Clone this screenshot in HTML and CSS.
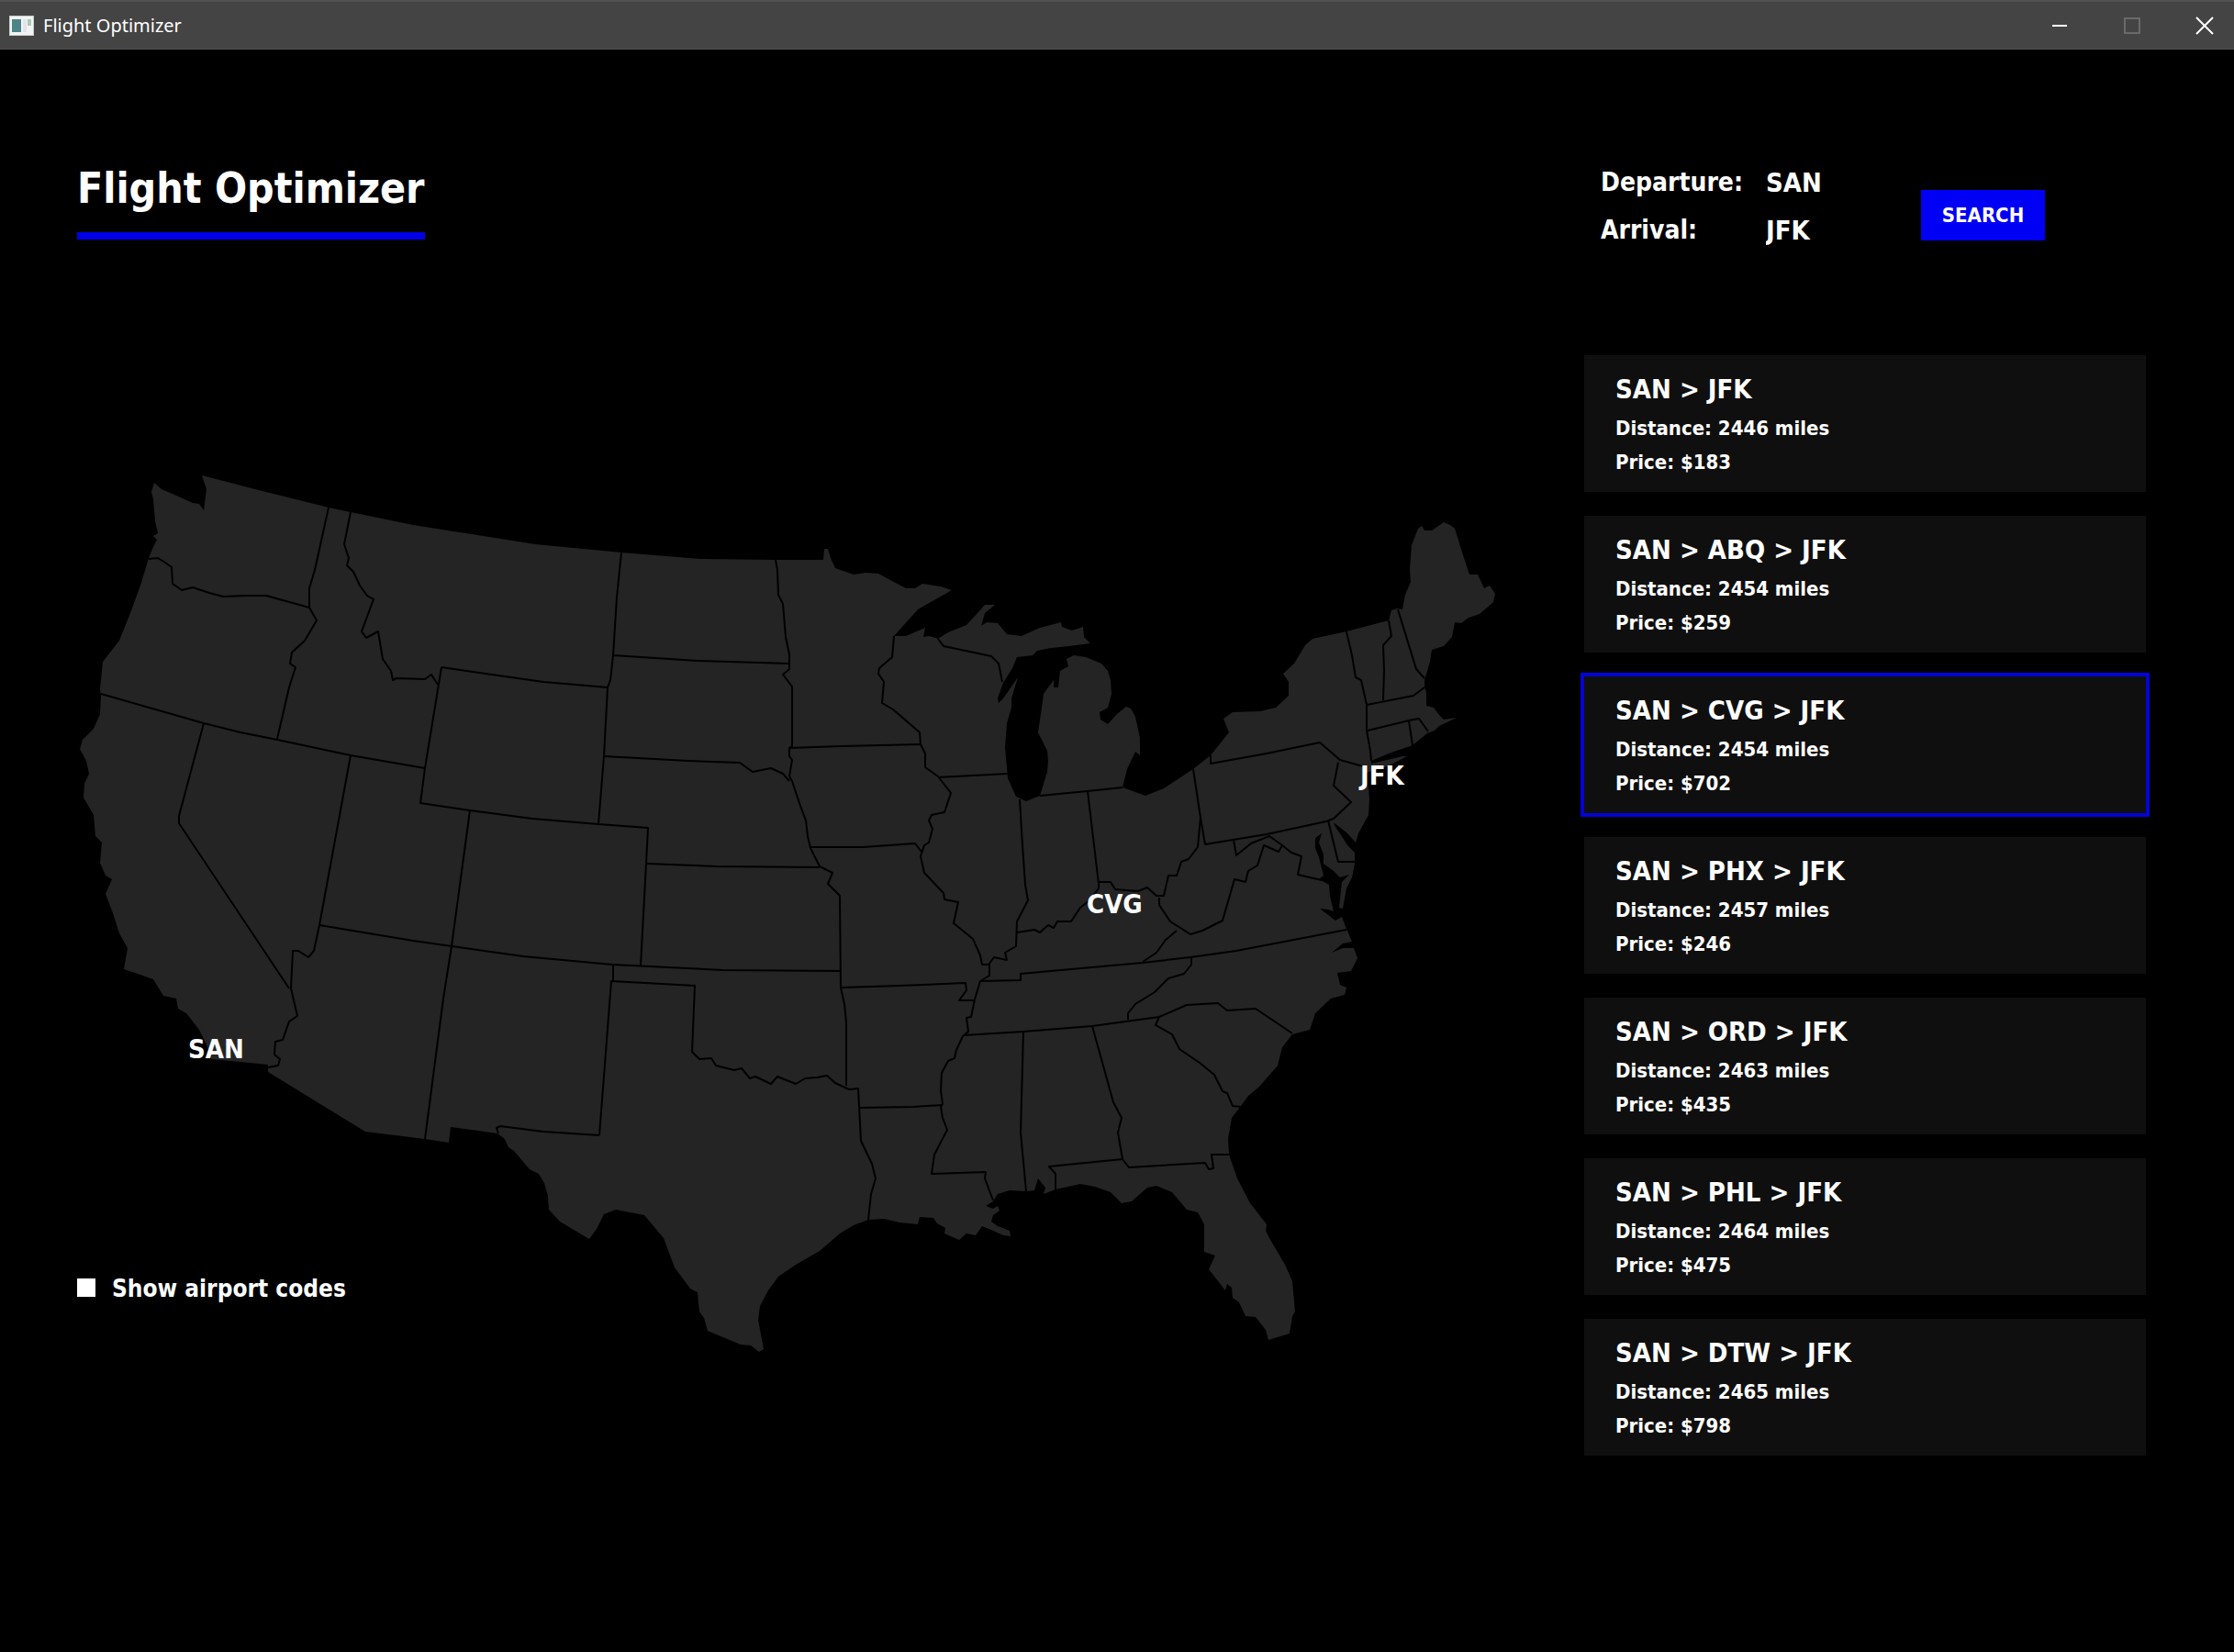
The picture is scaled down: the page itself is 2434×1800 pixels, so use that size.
FILE: index.html
```html
<!DOCTYPE html>
<html lang="en">
<head>
<meta charset="utf-8">
<title>Flight Optimizer</title>
<link rel="stylesheet" href="styles.css">
</head>
<body>
<header class="titlebar">
  <svg class="titlebar-icon" viewBox="0 0 27 22" aria-hidden="true">
    <rect width="27" height="22" fill="#c4cccc"/>
    <rect x="1" y="1" width="25" height="20" fill="#f2f4f4"/>
    <rect x="3" y="4" width="10" height="14" fill="#4d8488"/>
    <rect x="15" y="4" width="4" height="14" fill="#e2e6ea"/>
    <rect x="20" y="4" width="4" height="7" fill="#a9c9b8"/>
  </svg>
  <span class="titlebar-name">Flight Optimizer</span>
  <div class="window-controls">
    <button type="button" aria-label="Minimize"><svg viewBox="0 0 20 20"><path d="M2 10H18" stroke="#fff" stroke-width="2"/></svg></button>
    <button type="button" aria-label="Maximize" disabled><svg viewBox="0 0 20 20"><path d="M2 2H18V18H2Z" fill="none" stroke="#6a6a6a" stroke-width="2"/></svg></button>
    <button type="button" aria-label="Close"><svg viewBox="0 0 20 20"><path d="M1 1L19 19M19 1L1 19" stroke="#fff" stroke-width="2"/></svg></button>
  </div>
</header>

<main class="app">
  <section class="overview">
    <h1 class="app-title">Flight Optimizer</h1>
    <div class="map-area">
      <svg class="map" viewBox="84 512 1548 964" role="img" aria-label="Map of the route SAN, CVG, JFK">
        <path class="land" d="M168 525L165 535L167 543L169 567L172 580L167 583L171 587L167 595L162 607L153 637L142 667L130 697L112 720L109 750L110 757L109 777L102 793L90 805L87 815L94 828L97 842L92 853L91 868L102 887L104 910L111 917L109 939L115 953L122 957L115 973L123 994L130 1016L139 1032L135 1055L150 1060L167 1066L178 1084L192 1087L194 1098L203 1103L217 1121L225 1137L230 1153L292 1159L292 1167L398 1232L463 1240L489 1244L491 1227L542 1234L550 1240L554 1249L560 1253L577 1273L587 1278L593 1288L597 1302L598 1317L610 1330L642 1349L650 1338L658 1322L671 1317L702 1323L723 1348L735 1380L752 1403L760 1407L761 1418L762 1428L767 1435L771 1449L790 1457L807 1464L818 1465L827 1472L832 1469L829 1453L826 1437L828 1422L837 1405L848 1390L867 1377L893 1362L915 1343L930 1334L946 1328L963 1327L980 1331L1000 1333L1002 1325L1017 1326L1021 1332L1030 1337L1029 1343L1045 1350L1053 1343L1063 1345L1070 1335L1082 1340L1093 1345L1101 1346L1100 1340L1087 1335L1080 1330L1082 1323L1089 1318L1087 1313L1082 1316L1074 1313L1082 1308L1087 1300L1100 1296L1118 1297L1127 1296L1131 1283L1139 1293L1137 1300L1150 1295L1177 1289L1193 1292L1210 1298L1222 1310L1233 1308L1250 1293L1260 1291L1277 1298L1293 1317L1305 1320L1312 1333L1312 1363L1324 1367L1317 1382L1335 1405L1337 1398L1342 1402L1343 1413L1350 1418L1357 1433L1368 1434L1379 1448L1382 1459L1405 1452L1408 1433L1411 1428L1408 1395L1400 1377L1383 1348L1379 1340L1380 1333L1362 1310L1348 1283L1339 1257L1338 1240L1342 1217L1352 1204L1360 1193L1372 1183L1392 1160L1397 1140L1408 1126L1427 1121L1433 1103L1450 1087L1465 1083L1467 1075L1460 1072L1457 1059L1472 1057L1479 1043L1475 1032L1463 1032L1451 1037L1463 1027L1473 1025L1465 1006L1462 998L1455 1002L1438 989L1447 990L1453 992L1449 975L1448 963L1437 957L1442 953L1437 933L1433 923L1433 912L1440 907L1437 917L1442 930L1442 940L1453 948L1460 955L1470 952L1462 960L1459 988L1463 989L1467 967L1473 955L1476 940L1476 928L1468 920L1463 912L1455 900L1453 895L1458 899L1468 907L1477 917L1480 907L1491 887L1492 870L1491 857L1485 842L1512 834L1533 823L1528 823L1494 831L1494 828L1513 820L1539 811L1555 798L1563 795L1568 790L1587 781L1573 783L1568 778L1562 770L1554 768L1554 753L1552 748L1552 740L1558 720L1560 707L1573 703L1582 693L1585 677L1592 678L1600 672L1612 668L1627 655L1629 646L1623 637L1617 640L1610 625L1601 625L1595 607L1585 575L1580 571L1573 568L1560 577L1552 577L1549 572L1545 575L1538 593L1536 620L1537 633L1531 647L1528 663L1522 662L1516 664L1513 675L1467 687L1430 695L1422 702L1410 722L1398 733L1404 742L1404 757L1390 770L1373 774L1343 775L1333 782L1339 797L1319 822L1300 837L1268 858L1248 866L1223 857L1228 837L1237 818L1242 822L1242 803L1237 780L1232 771L1227 769L1217 777L1207 788L1199 783L1198 775L1207 770L1211 755L1210 740L1207 730L1200 722L1183 715L1170 713L1162 717L1164 725L1155 730L1153 748L1148 748L1148 740L1137 755L1135 770L1131 797L1141 817L1142 828L1141 840L1133 866L1118 872L1107 867L1098 847L1095 813L1097 787L1102 770L1102 760L1109 737L1093 760L1088 765L1087 760L1093 743L1103 727L1108 715L1125 713L1130 708L1145 705L1165 703L1188 700L1181 693L1180 682L1168 686L1157 682L1156 677L1133 683L1113 692L1097 690L1087 678L1075 677L1069 681L1073 667L1084 658L1073 658L1065 667L1053 680L1033 688L1022 695L1013 692L1006 693L1008 683L987 692L974 692L1000 663L1037 642L1025 638L1005 635L997 640L987 640L970 631L957 624L943 623L930 625L910 618L905 607L902 597L898 597L897 609L845 609L763 608L677 601L583 592L520 582L450 571L382 557L358 552L270 530L220 517L225 532L222 555L217 548L210 547L190 538L176 532Z"/>
        <g class="borders">
          <path d="M162 608L172 607L180 612L187 617L188 635L198 642L210 639L228 645L243 649L270 648L290 648L337 661M358 552L343 620L337 640V661L345 675L332 697L318 710L316 722L322 726L315 748L302 804M110 755L222 787L262 797L302 805L382 822L463 836M222 787L195 888V896L315 1076"/>
          <path d="M382 822L348 1007L342 1035L336 1042L325 1035L319 1035L317 1076L324 1106L315 1112L308 1132L300 1134L299 1148L305 1153L303 1160L292 1162M348 1007L450 1024L570 1041L667 1050L787 1056L915 1057M512 882L492 1030L483 1087L463 1240"/>
          <path d="M382 557L375 592L380 607L378 615L385 622L392 637L400 648L407 652L394 687L399 694L412 687L417 717L426 730L428 740L432 738L463 739L470 734L477 745M481 726L592 742L662 748L658 823L652 897M481 726L463 836L458 874L512 882L580 891L652 897L706 901L704 940L698 1051"/>
          <path d="M677 601L672 650L668 713L665 740L662 748M668 713L760 719L860 722M845 609L847 620L848 647L853 657L856 693L860 712V728L853 734L863 747V812L860 814V823L863 827L860 845M658 823L750 828L806 830L820 840L840 836L853 842L860 850M860 845L863 850L872 877L878 893L880 910L883 923L893 943L907 950L902 962L915 975L916 1075L920 1093L922 1113V1182M704 940L780 943L893 944"/>
          <path d="M668 1050V1068M653 1236L666 1068L757 1073L754 1145L762 1153L775 1152L780 1160L800 1165L808 1163L817 1174L823 1172L840 1180L847 1172L867 1180L877 1174L890 1173L901 1171L910 1179L925 1186L935 1185L938 1242L950 1267L954 1283L949 1300L946 1328M653 1236L592 1232L545 1226L541 1228L543 1234"/>
          <path d="M937 1206L995 1205L1027 1203M917 1075L980 1073L1052 1070L1053 1078L1045 1089H1062M860 814L917 812L1003 810M1022 846L1098 842M883 922H940L997 918L1004 927"/>
          <path d="M974 692L972 715L958 727L957 733L963 742L961 765L973 772L1002 797L1003 810L1008 820V835L1022 845L1036 863L1029 884L1015 887L1012 893L1016 902L1012 917L1007 920L1003 932L1007 950L1028 972L1029 979L1044 982L1039 1005L1060 1022L1068 1040L1070 1050H1078V1062L1068 1068L1062 1088L1058 1107L1053 1108L1055 1123L1049 1128L1042 1143L1040 1152L1033 1155L1026 1168L1025 1187L1027 1202L1025 1205L1027 1217L1032 1230L1018 1257L1015 1278L1074 1276L1073 1283L1082 1307"/>
          <path d="M1111 870L1114 920L1117 963L1120 980L1108 1003L1107 1030L1095 1037L1097 1045L1083 1042L1077 1050M1108 1015L1127 1012L1133 1015L1142 1007L1148 1010L1152 1003L1167 1003L1177 988L1187 980L1197 967V960L1210 960L1215 968L1240 970L1250 966L1260 975L1268 975L1273 953L1282 953L1287 938L1295 935L1305 922L1308 890L1300 837"/>
          <path d="M1308 890L1313 919L1380 908L1445 894L1453 891L1472 873L1453 855L1458 830M1319 822V831L1380 820L1438 808L1460 827L1485 834M1467 687L1473 713L1477 737L1483 740L1489 767V795L1493 817L1494 828M1513 675L1516 692L1507 702L1508 730L1507 762M1523 663L1543 728L1552 738M1489 767L1540 757L1552 748M1490 795L1535 784L1546 782L1556 796M1535 784L1539 811"/>
          <path d="M1185 861L1197 962M1133 866L1185 861L1223 857M1022 695L1028 703L1080 714L1088 722L1092 742M1263 977V985L1275 1003L1297 1017L1310 1013L1332 1002L1345 957L1357 960L1360 948L1370 942L1377 920L1393 927L1397 920L1383 910L1363 918L1347 931L1344 914M1397 920L1407 928L1418 932L1414 952L1440 958M1447 893L1458 938H1477"/>
          <path d="M1282 1013L1270 1023L1260 1037L1245 1047M1068 1068L1112 1067V1060L1167 1055L1245 1048L1297 1042L1347 1035L1467 1012M1298 1042V1050L1290 1060L1273 1065L1258 1080L1237 1093L1229 1103V1110M1050 1127L1115 1123L1190 1117L1263 1107L1293 1094L1327 1092L1337 1100L1368 1098L1408 1125M1263 1107L1259 1116L1277 1126L1285 1142L1307 1157L1323 1170L1332 1188L1337 1190L1343 1204L1352 1205"/>
          <path d="M1115 1123L1112 1233L1118 1297M1190 1117L1213 1200L1222 1217L1218 1233L1223 1262L1230 1271L1313 1266L1317 1273L1322 1272L1320 1257H1339M1223 1262L1143 1270L1150 1278V1295"/>
        </g>
        <text class="airport" x="205" y="1152">SAN</text>
        <text class="airport" x="1184" y="994">CVG</text>
        <text class="airport" x="1482" y="854">JFK</text>
      </svg>
      <label class="codes-toggle"><input type="checkbox">Show airport codes</label>
    </div>
  </section>

  <section class="results">
    <form class="search">
      <div class="search-fields">
        <label for="departure">Departure:</label>
        <input id="departure" type="text" value="SAN">
        <label for="arrival">Arrival:</label>
        <input id="arrival" type="text" value="JFK">
      </div>
      <button class="search-button" type="button">SEARCH</button>
    </form>
    <div class="routes">
      <button class="route" type="button"><span class="route-path">SAN &gt; JFK</span><span>Distance: 2446 miles</span><span>Price: $183</span></button>
      <button class="route" type="button"><span class="route-path">SAN &gt; ABQ &gt; JFK</span><span>Distance: 2454 miles</span><span>Price: $259</span></button>
      <button class="route selected" type="button" aria-pressed="true"><span class="route-path">SAN &gt; CVG &gt; JFK</span><span>Distance: 2454 miles</span><span>Price: $702</span></button>
      <button class="route" type="button"><span class="route-path">SAN &gt; PHX &gt; JFK</span><span>Distance: 2457 miles</span><span>Price: $246</span></button>
      <button class="route" type="button"><span class="route-path">SAN &gt; ORD &gt; JFK</span><span>Distance: 2463 miles</span><span>Price: $435</span></button>
      <button class="route" type="button"><span class="route-path">SAN &gt; PHL &gt; JFK</span><span>Distance: 2464 miles</span><span>Price: $475</span></button>
      <button class="route" type="button"><span class="route-path">SAN &gt; DTW &gt; JFK</span><span>Distance: 2465 miles</span><span>Price: $798</span></button>
    </div>
  </section>
</main>
</body>
</html>
```

FILE: styles.css
```css
* {
  box-sizing: border-box;
}

body {
  margin: 0;
  min-height: 100vh;
  background: #000;
  color: #fff;
  font: bold 28px/52px Tahoma, "DejaVu Sans Condensed", "DejaVu Sans", sans-serif;
}

button,
input {
  margin: 0;
  padding: 0;
  border: 0;
  background: none;
  color: inherit;
  font: inherit;
}

.titlebar {
  display: flex;
  align-items: center;
  height: 54px;
  padding: 0 0 0 10px;
  border-top: 2px solid #515151;
  border-bottom: 1px solid #4e4e4e;
  background: #444;
}

.titlebar-icon {
  width: 27px;
  height: 22px;
}

.titlebar-name {
  flex: 1;
  margin-left: 10px;
  font: 20px/28px "Noto Sans", "Open Sans", sans-serif;
}

.window-controls {
  display: flex;
  gap: 15px;
}

.window-controls button {
  display: grid;
  place-items: center;
  width: 64px;
  height: 51px;
}

.window-controls svg {
  width: 20px;
  height: 20px;
}

.app {
  display: grid;
  grid-template-columns: minmax(0, 1fr) 612px;
  column-gap: 94px;
  padding: 119px 96px 118px 84px;
}

.overview {
  display: flex;
  flex-direction: column;
  align-items: flex-start;
}

.app-title {
  margin: 0;
  padding-bottom: 15px;
  border-bottom: 8px solid #0000e6;
  font-size: 46px;
  line-height: 65px;
}

.map-area {
  display: grid;
  width: 100%;
  margin-top: 252px;
}

.map,
.codes-toggle {
  grid-area: 1 / 1;
}

.map {
  display: block;
  width: 100%;
}

.land {
  fill: #242424;
}

.borders {
  fill: none;
  stroke: #000;
  stroke-width: 2;
  stroke-linejoin: round;
}

.airport {
  fill: #fff;
  font-size: 29px;
}

.codes-toggle {
  display: flex;
  align-items: baseline;
  align-self: end;
  justify-self: start;
  gap: 18px;
  margin-bottom: 55px;
  font-size: 26px;
  line-height: 36px;
}

.codes-toggle input {
  width: 20px;
  height: 20px;
  appearance: none;
  background: #fff;
}

.search {
  display: flex;
  justify-content: space-between;
  align-items: flex-end;
  padding: 0 110px 0 18px;
}

.search-fields {
  display: grid;
  grid-template-columns: 180px 120px;
}

.search-fields input {
  width: 100%;
  height: 52px;
  font-size: 29px;
}

.search-button {
  width: 135px;
  height: 55px;
  margin-bottom: 15px;
  background: #0000f5;
  font-size: 22px;
  line-height: 36px;
}

.routes {
  display: flex;
  flex-direction: column;
  gap: 26px;
  margin-top: 110px;
}

.route {
  display: flex;
  flex-direction: column;
  padding: 13px 34px 14px;
  background: #0f0f0f;
  font-size: 22px;
  line-height: 37px;
  text-align: left;
}

.route-path {
  font-size: 29px;
  line-height: 48px;
}

.selected {
  outline: 4px solid #0404d4;
}
```
